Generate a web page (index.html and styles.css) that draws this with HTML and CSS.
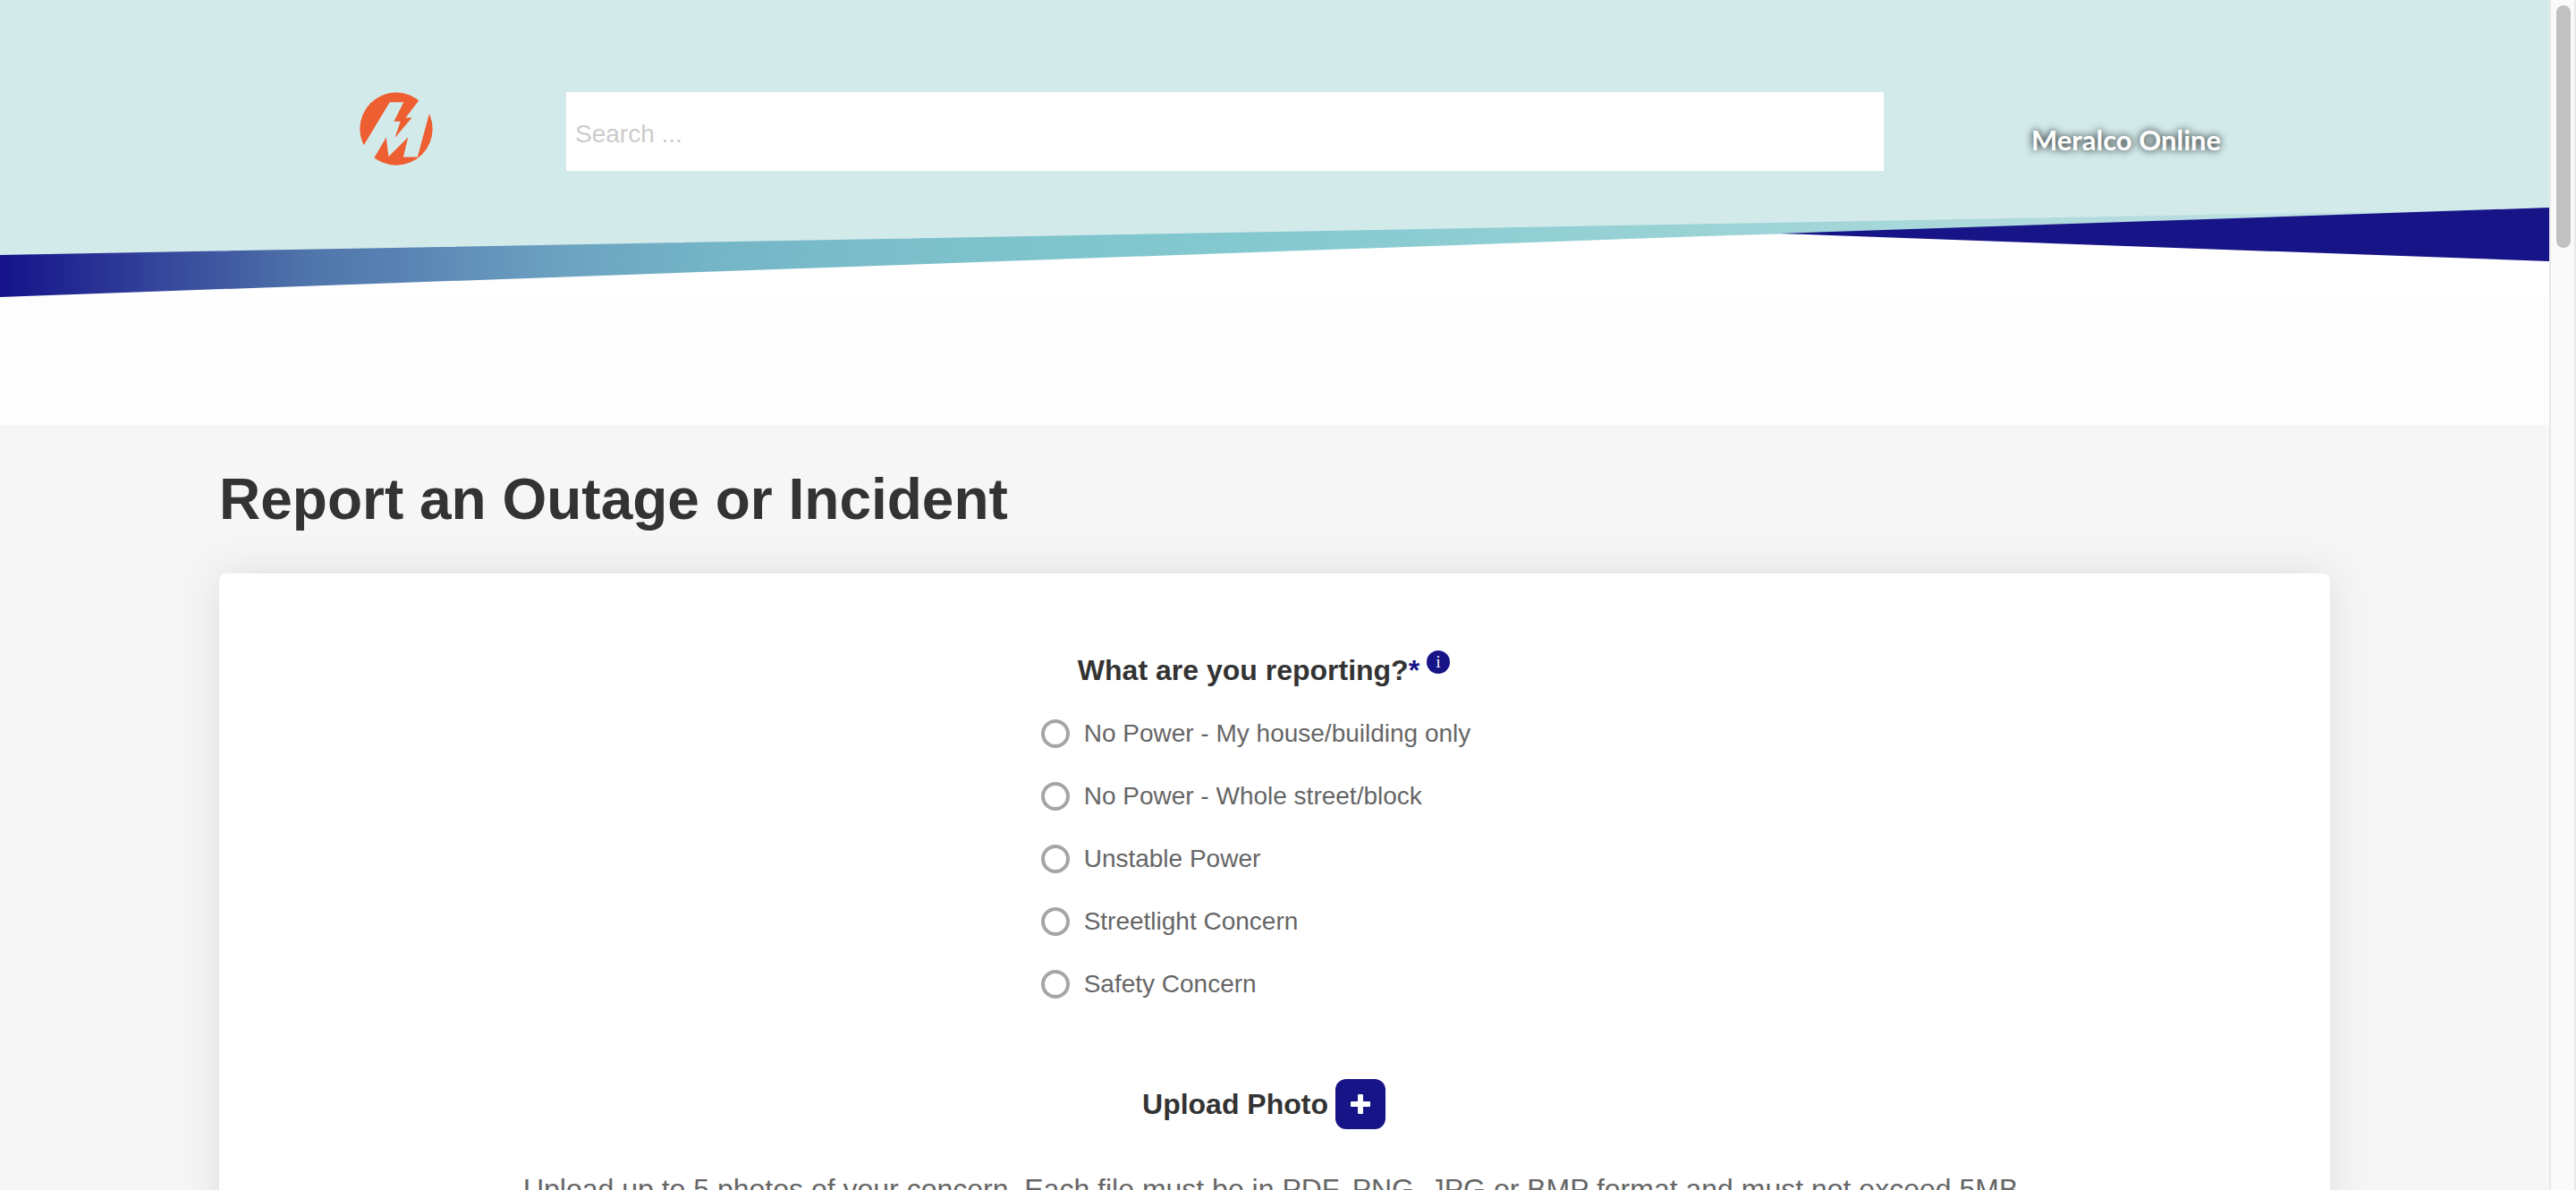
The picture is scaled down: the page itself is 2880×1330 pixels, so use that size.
FILE: index.html
```html
<!DOCTYPE html>
<html lang="en">
<head>
<meta charset="utf-8">
<title>Report an Outage or Incident</title>
<link rel="stylesheet" href="styles.css">
</head>
<body>
<div class="shell">
  <div class="page">
    <header class="header">
      <svg class="swoosh" viewBox="0 0 2850 332" preserveAspectRatio="none" aria-hidden="true">
        <defs>
          <linearGradient id="band" gradientUnits="userSpaceOnUse" x1="0" y1="0" x2="2850" y2="0">
            <stop offset="0" stop-color="#15128a"/>
            <stop offset="0.06" stop-color="#33439a"/>
            <stop offset="0.12" stop-color="#4f74aa"/>
            <stop offset="0.16" stop-color="#5a84b4"/>
            <stop offset="0.22" stop-color="#6ca2c0"/>
            <stop offset="0.28" stop-color="#74b5c7"/>
            <stop offset="0.34" stop-color="#7bbeca"/>
            <stop offset="0.42" stop-color="#7fc5cd"/>
            <stop offset="0.53" stop-color="#88cbd1"/>
            <stop offset="0.67" stop-color="#9ad3d6"/>
            <stop offset="0.8" stop-color="#b0dadd"/>
            <stop offset="1" stop-color="#cfe8ea"/>
          </linearGradient>
        </defs>
        <path fill="#d3eaeb" d="M0 0H2850V240L1990 262L0 300Z"/>
        <path fill="url(#band)" d="M0 285L2850 233V240L1990 261L0 332Z"/>
        <path fill="#171488" d="M1990 261L2850 232V292Z"/>
      </svg>
      <div class="bar">
        <a class="logo" href="#" aria-label="Meralco">
          <svg viewBox="68 68 248 248" width="82" height="82" aria-hidden="true">
            <mask id="cut">
              <rect x="60" y="60" width="270" height="270" fill="#fff"/>
              <path fill="#000" d="M170 102H217L184 167H206L187 223L245 154H224L268 97L300 60L330 100L303 143L264 287H216L232 221L166 286L158 221L117 290L100 316L50 300L82 248Z"/>
            </mask>
            <circle cx="192" cy="192" r="123" fill="#ed5f31" mask="url(#cut)"/>
          </svg>
        </a>
        <input class="search" type="search" placeholder="Search ..." aria-label="Search">
        <a class="brand" href="#">Meralco Online</a>
      </div>
    </header>
    <main class="main">
      <h1 class="title">Report an Outage or Incident</h1>
      <form class="card">
        <fieldset class="group">
          <legend class="question">What are you reporting?<span class="star">*</span><button class="info" type="button" aria-label="More information">i</button></legend>
          <div class="options">
            <label class="option"><input class="radio" type="radio" name="report">No Power - My house/building only</label>
            <label class="option"><input class="radio" type="radio" name="report">No Power - Whole street/block</label>
            <label class="option"><input class="radio" type="radio" name="report">Unstable Power</label>
            <label class="option"><input class="radio" type="radio" name="report">Streetlight Concern</label>
            <label class="option"><input class="radio" type="radio" name="report">Safety Concern</label>
          </div>
        </fieldset>
        <div class="upload">
          <span id="upload-label">Upload Photo</span>
          <button class="add" type="button" aria-labelledby="upload-label">
            <svg viewBox="0 0 24 24" width="24" height="24" aria-hidden="true"><path fill="#fff" d="M10 1h4q1 0 1 1v7h7q1 0 1 1v4q0 1-1 1h-7v7q0 1-1 1h-4q-1 0-1-1v-7h-7q-1 0-1-1v-4q0-1 1-1h7v-7q0-1 1-1Z"/></svg>
          </button>
        </div>
        <p class="hint">Upload up to 5 photos of your concern. Each file must be in PDF, PNG, JPG or BMP format and must not exceed 5MB.</p>
      </form>
    </main>
  </div>
  <div class="scrollbar" aria-hidden="true"><div class="thumb"></div></div>
</div>
</body>
</html>
```
FILE: styles.css
```css
* {
  box-sizing: border-box;
}

body {
  margin: 0;
  font-family: "Liberation Sans", Arial, sans-serif;
  color: #666;
  background: #f6f6f6;
}

.shell {
  display: grid;
  grid-template-columns: minmax(0, 1fr) 30px;
  height: 100vh;
}

.page {
  overflow-y: auto;
  scrollbar-width: none;
}

.header {
  display: grid;
  padding-bottom: 143px;
  background: linear-gradient(#fff 332px, #fdfdfd 332px);
}

.swoosh,
.bar {
  grid-area: 1 / 1;
}

.swoosh {
  display: block;
  width: 100%;
  height: 332px;
}

.bar {
  display: grid;
  grid-template-columns: 402fr 231fr 1473fr 165fr 579fr;
  align-items: start;
  padding-top: 103px;
}

.logo {
  grid-column: 2;
}

.logo svg {
  display: block;
}

.search {
  grid-column: 3;
  width: 100%;
  height: 88px;
  padding: 6px 10px 0;
  border: 0;
  background: #fff;
  color: #333;
  font: 28px "Liberation Sans", Arial, sans-serif;
  appearance: none;
}

.search::placeholder {
  color: #ccc;
}

.brand {
  grid-column: 5;
  padding-top: 33px;
  color: #fff;
  font: 700 31px/40px Lato, sans-serif;
  text-decoration: none;
  text-shadow: 0 0 10px #000;
}

.main {
  max-width: 2360px;
  margin: 0 auto;
}

.title {
  margin: 0;
  padding: 43px 0;
  color: #333;
  font-size: 64px;
  line-height: 80px;
}

.card {
  display: flex;
  flex-direction: column;
  align-items: center;
  padding: 84px 80px 120px;
  border-radius: 8px;
  background: #fff;
  box-shadow: 0 0 50px rgba(0, 0, 0, 0.1);
}

.group {
  display: flex;
  flex-direction: column;
  align-items: center;
  margin: 0;
  padding: 0 42px 0 0;
  border: 0;
}

.question {
  display: flex;
  justify-content: center;
  width: 100%;
  padding: 0 0 0 18px;
  color: #333;
  font-weight: 700;
  font-size: 32px;
  line-height: 48px;
}

.star {
  color: #171488;
}

.info {
  width: 26px;
  height: 26px;
  margin: 2px 0 0 8px;
  padding: 0;
  border: 0;
  border-radius: 50%;
  background: #171488;
  color: #fff;
  font: 18px/26px "Liberation Serif", serif;
}

.options {
  display: grid;
  gap: 38px;
  padding-top: 31px;
}

.option {
  display: flex;
  align-items: center;
  gap: 16px;
  font-size: 28px;
  line-height: 32px;
}

.radio {
  width: 32px;
  height: 32px;
  margin: 0;
  border: 4px solid #a5a5a5;
  border-radius: 50%;
  background: #fff;
  appearance: none;
}

.radio:checked {
  border-color: #171488;
}

.upload {
  display: flex;
  align-items: center;
  gap: 8px;
  margin-top: 90px;
  padding-right: 24px;
  color: #333;
  font-weight: 700;
  font-size: 32px;
}

.add {
  display: grid;
  place-items: center;
  width: 56px;
  height: 56px;
  padding: 0;
  border: 0;
  border-radius: 12px;
  background: #171488;
}

.hint {
  margin: 47px 0 0;
  font-size: 32px;
  line-height: 40px;
  text-align: center;
}

.scrollbar {
  padding: 6px;
  border: solid #e8e8e8;
  border-width: 0 2px;
  background: #fafafa;
}

.thumb {
  width: 16px;
  height: 271px;
  border-radius: 8px;
  background: #c1c1c1;
}
```
